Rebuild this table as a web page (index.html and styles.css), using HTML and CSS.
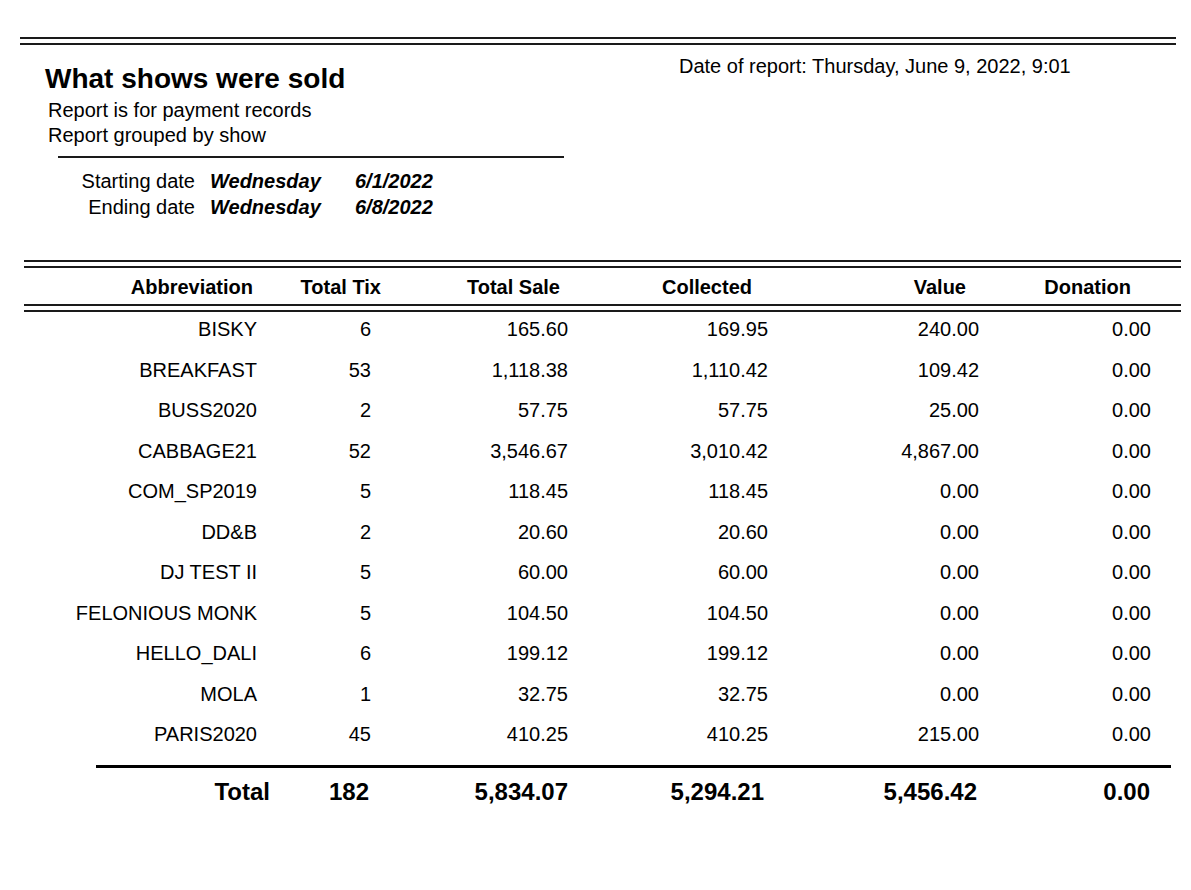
FILE: index.html
```html
<!DOCTYPE html>
<html>
<head>
<meta charset="utf-8">
<title>What shows were sold</title>
<link rel="stylesheet" href="styles.css">
</head>
<body>
<div class="page">
  <div class="double-rule top-rule"></div>
  <header class="report-head">
    <div class="head-left">
      <h1 class="title">What shows were sold</h1>
      <div class="subtitles">
        <div class="subtitle">Report is for payment records</div>
        <div class="subtitle">Report grouped by show</div>
      </div>
      <div class="head-rule"></div>
      <div class="dates">
        <span class="date-label">Starting date</span>
        <span class="date-day">Wednesday</span>
        <span class="date-val">6/1/2022</span>
        <span class="date-label">Ending date</span>
        <span class="date-day">Wednesday</span>
        <span class="date-val">6/8/2022</span>
      </div>
    </div>
    <div class="head-right">Date of report: Thursday, June 9, 2022, 9:01</div>
  </header>

  <section class="report-table">
    <div class="double-rule table-rule"></div>
    <div class="hdr-row">
      <span>Abbreviation</span>
      <span>Total Tix</span>
      <span>Total Sale</span>
      <span>Collected</span>
      <span>Value</span>
      <span>Donation</span>
    </div>
    <div class="double-rule table-rule hdr-rule"></div>
    <div class="rows">
      <div class="row"><span>BISKY</span><span>6</span><span>165.60</span><span>169.95</span><span>240.00</span><span>0.00</span></div>
      <div class="row"><span>BREAKFAST</span><span>53</span><span>1,118.38</span><span>1,110.42</span><span>109.42</span><span>0.00</span></div>
      <div class="row"><span>BUSS2020</span><span>2</span><span>57.75</span><span>57.75</span><span>25.00</span><span>0.00</span></div>
      <div class="row"><span>CABBAGE21</span><span>52</span><span>3,546.67</span><span>3,010.42</span><span>4,867.00</span><span>0.00</span></div>
      <div class="row"><span>COM_SP2019</span><span>5</span><span>118.45</span><span>118.45</span><span>0.00</span><span>0.00</span></div>
      <div class="row"><span>DD&amp;B</span><span>2</span><span>20.60</span><span>20.60</span><span>0.00</span><span>0.00</span></div>
      <div class="row"><span>DJ TEST II</span><span>5</span><span>60.00</span><span>60.00</span><span>0.00</span><span>0.00</span></div>
      <div class="row"><span>FELONIOUS MONK</span><span>5</span><span>104.50</span><span>104.50</span><span>0.00</span><span>0.00</span></div>
      <div class="row"><span>HELLO_DALI</span><span>6</span><span>199.12</span><span>199.12</span><span>0.00</span><span>0.00</span></div>
      <div class="row"><span>MOLA</span><span>1</span><span>32.75</span><span>32.75</span><span>0.00</span><span>0.00</span></div>
      <div class="row"><span>PARIS2020</span><span>45</span><span>410.25</span><span>410.25</span><span>215.00</span><span>0.00</span></div>
    </div>
    <div class="total-rule"></div>
    <div class="total-row">
      <span>Total</span>
      <span>182</span>
      <span>5,834.07</span>
      <span>5,294.21</span>
      <span>5,456.42</span>
      <span>0.00</span>
    </div>
  </section>
</div>
</body>
</html>
```

FILE: styles.css
```css
html, body {
  margin: 0;
  padding: 0;
  background: #fff;
}

body {
  font-family: "Liberation Sans", Arial, sans-serif;
  color: #000;
}

.page {
  width: 1191px;
  padding-top: 37px;
}

.double-rule {
  height: 4px;
  border-top: 2px solid #1a1a1a;
  border-bottom: 2px solid #1a1a1a;
}

.top-rule {
  margin-left: 20px;
  width: 1156px;
}

.report-head {
  display: flex;
}

.head-left {
  margin-left: 45px;
  margin-top: 17px;
  width: 560px;
}

.title {
  margin: 0;
  font-size: 28px;
  line-height: 34px;
  font-weight: bold;
}

.subtitles {
  margin-top: 2px;
}

.subtitle {
  padding-left: 3px;
  font-size: 20px;
  line-height: 25px;
}

.head-rule {
  margin-top: 8px;
  margin-left: 13px;
  width: 506px;
  height: 0;
  border-top: 2px solid #1a1a1a;
}

.dates {
  display: grid;
  grid-template-columns: 137px 160px auto;
  margin-top: 10px;
  margin-left: 13px;
  font-size: 20px;
  line-height: 26px;
}

.date-label {
  text-align: right;
}

.date-day,
.date-val {
  font-weight: bold;
  font-style: italic;
}

.date-day {
  padding-left: 15px;
}

.head-right {
  margin-left: 74px;
  margin-top: 9px;
  font-size: 20px;
  line-height: 24px;
  white-space: nowrap;
}

.report-table {
  margin-top: 40px;
}

.table-rule {
  margin-left: 24px;
  width: 1157px;
}

.hdr-rule {
  margin-top: 5px;
}

.hdr-row,
.row,
.total-row {
  display: grid;
  margin-left: 24px;
  width: 1157px;
  white-space: nowrap;
}

.hdr-row span,
.row span,
.total-row span {
  text-align: right;
}

.hdr-row {
  grid-template-columns: 229px 128px 179px 192px 214px 165px;
  margin-top: 7px;
  font-size: 20px;
  line-height: 24px;
  font-weight: bold;
}

.rows {
  display: flex;
  flex-direction: column;
  gap: 16.5px;
  padding-top: 5px;
}

.row {
  grid-template-columns: 233px 114px 197px 200px 211px 172px;
  font-size: 20px;
  line-height: 24px;
}

.total-rule {
  margin-top: 19px;
  margin-left: 96px;
  width: 1075px;
  height: 3px;
  background: #000;
}

.total-row {
  grid-template-columns: 246px 99px 199px 196px 213px 173px;
  margin-top: 10px;
  font-size: 24px;
  line-height: 28px;
  font-weight: bold;
}
```
